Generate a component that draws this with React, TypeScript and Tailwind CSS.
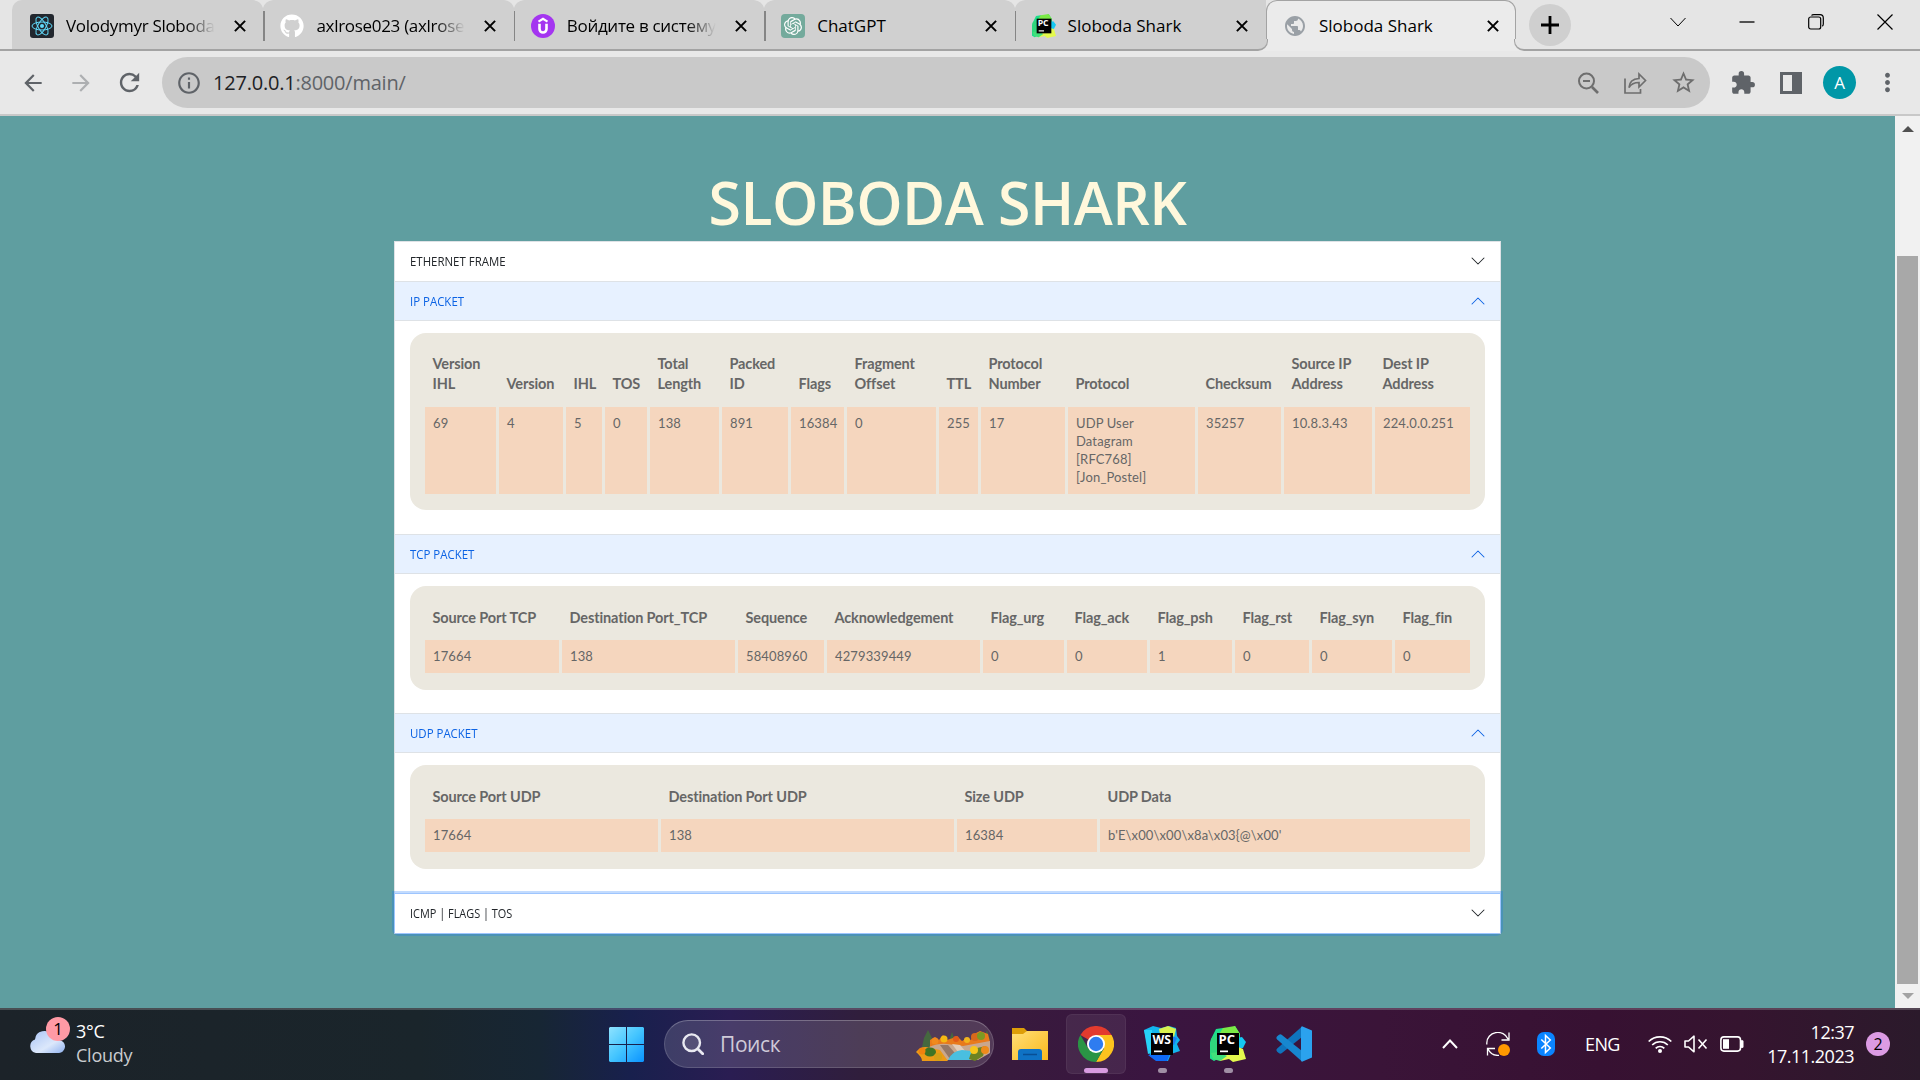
import React from "react";
import { FaGithub } from "react-icons/fa";
import { SiOpenai } from "react-icons/si";
import {
  MdArrowBack,
  MdArrowForward,
  MdRefresh,
  MdInfoOutline,
  MdStarBorder,
  MdExtension,
  MdMoreVert,
  MdPublic,
} from "react-icons/md";

/* ---------- Small logos ---------- */

function ReactLogo() {
  return (
    <svg viewBox="0 0 24 24" className="h-6 w-6">
      <rect width="24" height="24" rx="3" fill="#22272e" />
      <g fill="none" stroke="#61dafb" strokeWidth="1">
        <ellipse cx="12" cy="12" rx="10" ry="4" />
        <ellipse cx="12" cy="12" rx="10" ry="4" transform="rotate(60 12 12)" />
        <ellipse cx="12" cy="12" rx="10" ry="4" transform="rotate(120 12 12)" />
      </g>
      <circle cx="12" cy="12" r="2" fill="#61dafb" />
    </svg>
  );
}

function UdemyLogo() {
  return (
    <svg viewBox="0 0 24 24" className="h-6 w-6">
      <circle cx="12" cy="12" r="12" fill="#a435f0" />
      <path d="M7.500 7.600 12 4.900l4.500 2.700" fill="none" stroke="#fff" strokeWidth="2.200" />
      <path d="M8.500 9.700v5.300a3.500 3.500 0 0 0 7 0V9.700" fill="none" stroke="#fff" strokeWidth="2.600" />
    </svg>
  );
}

function ChatLogo() {
  return (
    <span className="flex h-6 w-6 items-center justify-center rounded-[4px] bg-[#74aa9c] text-white">
      <SiOpenai size={18} />
    </span>
  );
}

function PyCharmLogo({ className }: { className: string }) {
  return (
    <svg viewBox="0 0 36 36" className={className}>
      <path d="M1 13 6 3l7-1 5 2 7-4 5 8 0 5-13 15-13 7-8-5z" fill="#1fdd8b" />
      <path d="M13 2 25 0l5 8-6 4-16-2z" fill="#7bea46" />
      <path d="M1 13 8 8l2 14-5 10-5-4z" fill="#2fd67c" />
      <path d="m27 12 5-1 4 5-3 6-6 1z" fill="#14c8f2" />
      <path d="m8 28 20-7 5 2 3 10-13 3-4-3-9 2z" fill="#e4f94d" />
      <path d="m1 27 8-1 8 4-7 5-7-2z" fill="#41e07a" />
      <rect x="7" y="7" width="22" height="22" fill="#020202" />
      <text x="8.500" y="18" fontSize="12" fontWeight="700" fontFamily="Open Sans" fill="#fff" textLength="16.500" lengthAdjust="spacingAndGlyphs">
        PC
      </text>
      <rect x="10" y="24.500" width="8" height="1.700" fill="#fff" />
    </svg>
  );
}

function WebStormLogo() {
  return (
    <svg viewBox="0 0 36 36" className="h-9 w-9">
      <path d="M0 4 9 0l8 2 8-2 7 2 1 8 3 4-3 4 3 7-9 3-3 7-11 0-7-5z" fill="#12b5ee" />
      <path d="m15 3 9-3 8 3-2 8-13 2z" fill="#d9f24e" />
      <path d="m28 10 5 2-3 7-4-1z" fill="#1e7df0" />
      <path d="m4 29 10-1 12 0-3 7-11 0z" fill="#0f6bf5" />
      <path d="M0 4 8 4l1 22-5 2z" fill="#27d2f7" />
      <rect x="7" y="7" width="22" height="22" fill="#020202" />
      <text x="8.400" y="18" fontSize="12" fontWeight="700" fontFamily="Open Sans" fill="#fff" textLength="18.500" lengthAdjust="spacingAndGlyphs">
        WS
      </text>
      <rect x="10" y="24.500" width="8" height="1.700" fill="#fff" />
    </svg>
  );
}

function CloseX() {
  return (
    <svg viewBox="0 0 12 12" className="h-3 w-3 shrink-0">
      <path d="M.9.9l10.200 10.200M11.100.9.9 11.100" stroke="#000" strokeWidth="2" />
    </svg>
  );
}

/* ---------- Browser chrome ---------- */

type Tab = { title: string; icon: React.ReactNode; fade?: boolean };

const TABS: Tab[] = [
  { title: "Volodymyr Sloboda", icon: <ReactLogo />, fade: true },
  { title: "axlrose023 (axlrose", icon: <FaGithub size={24} color="#fff" />, fade: true },
  { title: "Войдите в систему", icon: <UdemyLogo />, fade: true },
  { title: "ChatGPT", icon: <ChatLogo /> },
  { title: "Sloboda Shark", icon: <PyCharmLogo className="h-6 w-6" /> },
];

function TabLabel({ title, fade }: { title: string; fade?: boolean }) {
  return (
    <span
      className={
        "ml-3 w-[149px] whitespace-nowrap text-[17px] leading-6 " +
        (fade
          ? "bg-[linear-gradient(to_right,#000_80%,#d0d0d0)] bg-clip-text tracking-[-0.3px] text-transparent"
          : "text-black")
      }
    >
      {title}
    </span>
  );
}

function TabStrip() {
  return (
    <div className="flex h-[51px] border-b-2 border-[#a3a3a3] bg-[#e5e5e5]">
      <div className="h-[49px] w-3 rounded-br-[10px] bg-[#e5e5e5]" />
      <div className="flex h-[49px] w-[1254px] rounded-tl-[10px] bg-[#d0d0d0]">
        {TABS.map((t, i) => (
          <div key={i} className="relative flex h-[49px] w-[250.400px] items-center pl-[18px] pt-[2px]">
            {i > 0 && <span className="absolute left-[1px] top-[11px] h-[30px] w-[1.500px] bg-[#858585]" />}
            {i > 0 && (
              <svg viewBox="0 0 20 8" className="absolute -left-[9px] top-0 h-2 w-5">
                <path d="M0 0h20q-8 1-10 8Q8 1 0 0z" fill="#e5e5e5" />
              </svg>
            )}
            <span className="h-6 w-6 shrink-0">{t.icon}</span>
            <TabLabel title={t.title} fade={t.fade} />
            <span className="ml-[19px]">
              <CloseX />
            </span>
          </div>
        ))}
      </div>
      <div className="relative h-[51px] w-[250px] shrink-0 rounded-t-[11px] border-x-[1.500px] border-t-[1.500px] border-[#a3a3a3] bg-[#ebebeb]">
        <div className="absolute -left-[10px] bottom-0 h-3 w-[11px] bg-[#ebebeb]">
          <div className="h-3 w-[11px] rounded-br-[10px] border-b-2 border-r border-[#a3a3a3] bg-[#d0d0d0]" />
        </div>
        <div className="absolute -right-[10px] bottom-0 h-3 w-[11px] bg-[#ebebeb]">
          <div className="h-3 w-[11px] rounded-bl-[10px] border-b-2 border-l border-[#a3a3a3] bg-[#e5e5e5]" />
        </div>
        <div className="flex h-[49px] items-center pl-[16px]">
          <MdPublic size={24} color="#9aa0a6" className="shrink-0" />
          <TabLabel title="Sloboda Shark" />
          <span className="ml-[19px]">
            <CloseX />
          </span>
        </div>
      </div>
      <div className="ml-[13px] mt-[4px] flex h-[42px] w-[42px] items-center justify-center rounded-full bg-[#cfcfcf]">
        <svg viewBox="0 0 18 18" className="h-[18px] w-[18px]">
          <path d="M9 0v18M0 9h18" stroke="#000" strokeWidth="2.800" />
        </svg>
      </div>
      <div className="ml-auto flex h-[43px] items-center gap-[53px] pr-[27px] text-black">
        <svg viewBox="0 0 16 16" className="h-4 w-4" fill="none" stroke="currentColor" strokeWidth="1">
          <path d="m.5 4 7.500 8 7.500-8" />
        </svg>
        <svg viewBox="0 0 16 16" className="h-4 w-4" stroke="currentColor" strokeWidth="1.300">
          <path d="M.5 8h15" />
        </svg>
        <svg viewBox="0 0 16 16" className="h-4 w-4" fill="none" stroke="currentColor" strokeWidth="1.200">
          <rect x=".7" y="3" width="12" height="12" rx="2" />
          <path d="M3.500 1.500Q4 .7 6 .7h6q3.300 0 3.300 3.300v6q0 1.500-1 2.300" />
        </svg>
        <svg viewBox="0 0 16 16" className="h-4 w-4" stroke="currentColor" strokeWidth="1.200">
          <path d="m.5.5 15 15M15.500.5l-15 15" />
        </svg>
      </div>
    </div>
  );
}

function Toolbar() {
  return (
    <div className="flex h-[65px] items-center border-b-2 border-[#c8c8c8] bg-[#e8e8e8] pl-5 text-[#5f6368]">
      <MdArrowBack size={26} />
      <MdArrowForward size={26} className="ml-[22px] text-[#adafb1]" />
      <MdRefresh size={29} className="ml-[21px]" />
      <div className="ml-[18px] flex h-[51px] w-[1548px] items-center rounded-full bg-[#c9c9c9] pl-[14px] pr-[13.5px]">
        <MdInfoOutline size={26} />
        <span className="ml-[11px] text-[20px] tracking-[-0.22px] text-[#5f6368]">
          <span className="text-[#202124]">127.0.0.1</span>:8000/main/
        </span>
        <span className="ml-auto flex items-center gap-[23px] text-[#6e6e6e]">
          <svg viewBox="0 0 24 24" className="h-6 w-6" fill="none" stroke="currentColor" strokeWidth="2">
            <circle cx="10.500" cy="10" r="7.500" />
            <path d="M7 10h7" />
            <path d="m16 16 6 6" strokeWidth="2.600" />
          </svg>
          <svg viewBox="0 0 24 24" className="h-6 w-6" fill="none" stroke="currentColor" strokeWidth="1.700">
            <path d="M2 7.500V22h15.500v-4" />
            <path d="M6 16.500q.5-8.500 10-9V3l6.500 6.500-6.500 6.500v-4.500q-7 0-10 5z" />
          </svg>
          <MdStarBorder size={27} />
        </span>
      </div>
      <MdExtension size={26} className="ml-[20px]" />
      <svg viewBox="0 0 22 22" className="ml-[24px] h-[22px] w-[22px]">
        <path fill="currentColor" fillRule="evenodd" d="M0 0h22v22H0zM3 3v16h9V3z" />
      </svg>
      <span className="ml-[21px] flex h-[33px] w-[33px] items-center justify-center rounded-full bg-[#0097a7] text-[17px] text-white">
        A
      </span>
      <MdMoreVert size={29} className="ml-[17px]" />
    </div>
  );
}

/* ---------- Page content ---------- */

type TableData = { cols: string; headers: string[]; cells: string[]; tall?: boolean };

const IP: TableData = {
  tall: true,
  cols: "grid-cols-[71px_64px_36px_42px_69px_66px_53px_89px_39px_84px_127px_83px_88px_95px]",
  headers: ["Version IHL", "Version", "IHL", "TOS", "Total Length", "Packed ID", "Flags", "Fragment Offset", "TTL", "Protocol Number", "Protocol", "Checksum", "Source IP Address", "Dest IP Address"],
  cells: ["69", "4", "5", "0", "138", "891", "16384", "0", "255", "17", "UDP User Datagram [RFC768] [Jon_Postel]", "35257", "10.8.3.43", "224.0.0.251"],
};

const TCP: TableData = {
  cols: "grid-cols-[134px_173px_86px_153px_81px_80px_82px_74px_80px_75px]",
  headers: ["Source Port TCP", "Destination Port_TCP", "Sequence", "Acknowledgement", "Flag_urg", "Flag_ack", "Flag_psh", "Flag_rst", "Flag_syn", "Flag_fin"],
  cells: ["17664", "138", "58408960", "4279339449", "0", "0", "1", "0", "0", "0"],
};

const UDP: TableData = {
  cols: "grid-cols-[233px_293px_140px_370px]",
  headers: ["Source Port UDP", "Destination Port UDP", "Size UDP", "UDP Data"],
  cells: ["17664", "138", "16384", "b'E\\x00\\x00\\x8a\\x03{@\\x00'"],
};

function Chevron({ open }: { open?: boolean }) {
  return (
    <svg
      viewBox="0 0 16 16"
      className={"h-4 w-4 " + (open ? "rotate-180 text-[#0c63e4]" : "text-[#212529]")}
      fill="none"
      stroke="currentColor"
      strokeWidth="1.050"
      strokeLinecap="round"
      strokeLinejoin="round"
    >
      <path d="m2 5 6 6 6-6" />
    </svg>
  );
}

function SectionHeader({ title, open }: { title: string; open?: boolean }) {
  return (
    <div
      className={
        "flex items-center justify-between pl-[15px] pr-[14.5px] text-[13px] " +
        (open ? "h-[38px] bg-[#e7f1ff] text-[#0c63e4]" : "h-[39px] bg-white pb-px text-[#212529]")
      }
    >
      <span
        className={
          "origin-left leading-5 " + (title.startsWith("ICMP") ? "scale-x-[.84]" : "scale-x-[.88]")
        }
      >
        {title}
      </span>
      <Chevron open={open} />
    </div>
  );
}

function DataPanel({ data }: { data: TableData }) {
  return (
    <div
      className={
        "rounded-[16px] bg-[#ebe8df] px-[15px] font-['Lato',sans-serif] text-[#666] [font-variant-ligatures:none] " +
        (data.tall ? "h-[177px] pt-[21px]" : "h-[104px] pt-[22px]")
      }
    >
      <div
        className={
          "grid items-end gap-[3px] text-[14.5px] font-bold leading-5 tracking-[-0.13px] " +
          data.cols +
          (data.tall ? " h-[53px] pb-[13px]" : " h-[32px] pb-[12px]")
        }
      >
        {data.headers.map((h) => (
          <div key={h} className="pl-[7.5px]">
            {h}
          </div>
        ))}
      </div>
      <div className={"grid gap-[3px] text-[13px] leading-[18px] tracking-[0.13px] " + data.cols + (data.tall ? " h-[87px]" : " h-[33px]")}>
        {data.cells.map((c, i) => (
          <div key={i} className={"bg-[#f5d6be] pl-2 pt-[7px] " + (c.startsWith("UDP User") ? "pr-[45px]" : "")}>
            {c}
          </div>
        ))}
      </div>
    </div>
  );
}

function OpenSection({ title, data, height }: { title: string; data: TableData; height: string }) {
  return (
    <div className={"border-t border-[#dee2e6] " + height}>
      <SectionHeader title={title} open />
      <div className="border-t border-[#dee2e6] px-[15px] pt-3">
        <DataPanel data={data} />
      </div>
    </div>
  );
}

function ScrollBar() {
  return (
    <div className="flex w-[25px] flex-col items-center bg-[#f1f1f1]">
      <div className="flex h-[140px] w-full justify-center pt-[10px]">
        <svg viewBox="0 0 12 6" className="h-[6px] w-3">
          <path d="m0 6 6-6 6 6z" fill="#505050" />
        </svg>
      </div>
      <div className="h-[728px] w-[21px] bg-[#a8a8a8]" />
      <svg viewBox="0 0 12 6" className="mt-[9px] h-[6px] w-3">
        <path d="m0 0 6 6 6-6z" fill="#a3a3a3" />
      </svg>
    </div>
  );
}

function Page() {
  return (
    <div className="flex h-[892px] bg-[#5f9ea0]">
      <div className="flex flex-1 flex-col items-center">
        <h1 className="mt-[47px] h-[78px] whitespace-nowrap text-[59px] font-semibold leading-[78px] tracking-[-0.55px] text-[#fff8dc]">
          SLOBODA SHARK
        </h1>
        <div className="w-[1107px] border border-[#dee2e6] bg-white">
          <SectionHeader title="ETHERNET FRAME" />
          <OpenSection title="IP PACKET" data={IP} height="h-[253px]" />
          <OpenSection title="TCP PACKET" data={TCP} height="h-[179px]" />
          <OpenSection title="UDP PACKET" data={UDP} height="h-[180px]" />
          <div className="relative z-10 mt-px rounded-b-[4px] shadow-[0_0_0_1px_#9ec5fe,0_0_0_3px_rgba(13,110,253,0.25)]">
            <SectionHeader title="ICMP | FLAGS | TOS" />
          </div>
        </div>
      </div>
      <ScrollBar />
    </div>
  );
}

/* ---------- Taskbar ---------- */

function Landscape() {
  return (
    <svg viewBox="0 0 74 31" className="h-[31px] w-[74px]">
      <path d="m12 0 4 8 2 9H6l2-9zM36 2l3 9h-6zM71 0l3 10h-7z" fill="#45683f" />
      <path d="M14 18V10l5-3 4 3 4-5 4 5 6-2 4-2 5 5 5-3 4 2 3-6 6-3 8 3 2 8v8z" fill="#e87a1c" />
      <circle cx="28" cy="9" r="3.500" fill="#f5b913" />
      <circle cx="19" cy="11" r="3.500" fill="#f08a1d" />
      <circle cx="40" cy="9" r="3" fill="#e25b19" />
      <circle cx="51" cy="10" r="3" fill="#f2b41e" />
      <circle cx="59" cy="7" r="4" fill="#d9691b" />
      <circle cx="65" cy="6" r="4" fill="#7c9a22" />
      <path d="M13 17q10-4 18-3l16 2 27-5v12l-12 7H26z" fill="#c9a78e" />
      <path d="m24 15 10 14h10L32 15z" fill="#947767" />
      <path d="m36 14 6 8 8 0-6-7z" fill="#e3ccb8" />
      <path d="M32 30q4-9 14-10l10 1-2 9z" fill="#49bfe0" />
      <path d="M0 22q6-7 14-4l10 2 8 11H6q0-4-6-9z" fill="#ec9b16" />
      <ellipse cx="14" cy="22" rx="6" ry="4.500" fill="#3f7424" />
      <circle cx="6" cy="21" r="3.500" fill="#f0820e" />
      <circle cx="22" cy="27" r="4" fill="#d6a017" />
      <path d="M53 29q2-9 8-11l9-2-3 10-8 5z" fill="#6c8323" />
      <circle cx="58" cy="20" r="4" fill="#f7c61c" />
      <circle cx="69" cy="20" r="4" fill="#ee8b1b" />
    </svg>
  );
}

function ChromeLogo() {
  return (
    <svg viewBox="0 0 36 36" className="h-9 w-9">
      <path d="M18 18 2.400 9A18 18 0 0 1 33.600 9z" fill="#e33b2e" />
      <path d="M18 9h15.600A18 18 0 0 1 18 36l7.800-13.500z" fill="#fcc31e" />
      <path d="M2.400 9A18 18 0 0 0 18 36l7.800-13.500L10.200 22.500z" fill="#2a9445" />
      <circle cx="18" cy="18" r="9" fill="#fff" />
      <circle cx="18" cy="18" r="7.200" fill="#2e7cf0" />
    </svg>
  );
}

function VsCodeLogo() {
  return (
    <svg viewBox="0 0 36 36" className="h-9 w-9">
      <path d="M1.200 22.500q-1.600 1.600 0 3.200l1.800 1.600q1.300.9 2.600 0L26 11V.6z" fill="#0f74bd" />
      <path d="M1.200 13.500q-1.600-1.600 0-3.200L3 8.700q1.300-.9 2.600 0L26 25v10.400z" fill="#1787cf" />
      <path d="M26 .3 36 4.500v27L26 35.700q-1-.5-1-1.700V2q0-1.200 1-1.700z" fill="#2ba2ee" />
    </svg>
  );
}

function FolderLogo() {
  return (
    <svg viewBox="0 0 36 34" className="h-[34px] w-9">
      <defs>
        <linearGradient id="folder" x2="1" y2="1">
          <stop stopColor="#ffdf78" />
          <stop offset="1" stopColor="#fbb91b" />
        </linearGradient>
      </defs>
      <path d="M0 1h12l4 4v8H0z" fill="#dd9e08" />
      <path d="M0 7h11l4-3h21v29H0z" fill="url(#folder)" />
      <path d="M6 33v-8q0-3 3-3h18q3 0 3 3v8z" fill="#0f72c4" />
      <path d="M11 27.500h14" stroke="#084f94" strokeWidth="1.500" />
    </svg>
  );
}

function AppSlot({ children, active, dot }: { children: React.ReactNode; active?: boolean; dot?: boolean }) {
  return (
    <div
      className={
        "relative flex h-[60px] w-[60px] items-center justify-center " +
        (active ? "rounded-[6px] border border-white/5 bg-white/[0.07]" : "")
      }
    >
      {children}
      {active && <span className="absolute bottom-0 h-[5px] w-6 rounded-full bg-[#d89be0]" />}
      {dot && <span className="absolute bottom-[1px] h-[5px] w-[9px] rounded-full bg-[#a08fa5]" />}
    </div>
  );
}

function Tray() {
  return (
    <div className="flex h-[68px] items-center text-white">
      <svg viewBox="0 0 16 10" className="h-[10px] w-4" fill="none" stroke="currentColor" strokeWidth="2">
        <path d="m1 9 7-7.500L15 9" />
      </svg>
      <svg viewBox="0 0 24 24" className="ml-7 h-6 w-6" fill="none" stroke="currentColor" strokeWidth="1.300">
        <path d="M.8 12.500V11A11 10.500 0 0 1 22 7M23 .5V8h-7.500" />
        <path d="M1.500 23.500V16.500H9M2 17a11 11 0 0 0 11 6.300" />
        <circle cx="18" cy="18" r="6" fill="#ff9800" stroke="none" />
      </svg>
      <svg viewBox="0 0 18 24" className="ml-[27px] h-6 w-[18px]">
        <rect width="18" height="24" rx="7" fill="#0a84ff" />
        <path d="m4.300 7.500 9 8.500-4.800 4.500v-17l4.800 4.500-9 8.500" fill="none" stroke="#fff" strokeWidth="1.500" />
      </svg>
      <span className="ml-[30px] w-[36px] text-[18px] tracking-[-0.6px]">ENG</span>
      <svg viewBox="0 0 24 18" className="ml-[27px] h-[18px] w-6" fill="none" stroke="currentColor" strokeWidth="1.700">
        <path d="M.7 6.500a16 16 0 0 1 22.600 0M4.200 10a11 11 0 0 1 15.600 0M7.700 13.300a6 6 0 0 1 8.600 0" />
        <circle cx="12" cy="16" r="2" fill="currentColor" stroke="none" />
      </svg>
      <svg viewBox="0 0 24 18" className="ml-3 h-[18px] w-6" fill="none" stroke="currentColor" strokeWidth="1.600">
        <path d="M1 6h3.500L10 1.200v15.600L4.500 12H1z" strokeLinejoin="round" />
        <path d="m14.500 4.500 8 9M22.500 4.500l-8 9" />
      </svg>
      <svg viewBox="0 0 24 16" className="ml-3 h-4 w-6" fill="none" stroke="currentColor" strokeWidth="1.600">
        <rect x=".9" y=".9" width="19.600" height="14.200" rx="3" />
        <rect x="3" y="3.200" width="6" height="9.600" fill="currentColor" stroke="none" />
        <path d="M22 5.500v5" strokeWidth="3" strokeLinecap="round" />
      </svg>
      <div className="ml-[19px] w-[91px] text-right text-[18px] leading-6 tracking-[-0.5px]">
        <div>12:37</div>
        <div>17.11.2023</div>
      </div>
      <span className="ml-3 mr-[30px] flex h-6 w-6 items-center justify-center rounded-full bg-[#dc9be3] text-[16px] text-black">2</span>
    </div>
  );
}

function Taskbar() {
  return (
    <div className="flex h-[72px] items-start border-t-2 border-white/20 bg-[linear-gradient(to_right,#1c2329_0,#1a252b_420px,#172634_540px,#18204d_630px,#2a1d52_730px,#301e3c_860px,#381a3d_1010px,#3a1540_1150px,#3a1438_1380px,#371132_1600px,#35142f_1740px,#2b1a2b_1920px)] bg-origin-border text-white">
      <div className="relative flex w-[609px] pl-[29px] pt-[7px]">
        <svg viewBox="0 0 36 24" className="mt-3 h-6 w-9">
          <defs>
            <linearGradient id="cloud" x2="1" y2="1">
              <stop stopColor="#a9c4f5" />
              <stop offset=".6" stopColor="#dce8fb" />
              <stop offset="1" stopColor="#8fb1ef" />
            </linearGradient>
          </defs>
          <path d="M7 24a7 7 0 0 1-1-13.500A9 9 0 0 1 23 7q6-1 7 4a6.500 6.500 0 0 1-1 13z" fill="url(#cloud)" />
        </svg>
        <span className="absolute left-[46px] top-[7px] flex h-6 w-6 items-center justify-center rounded-full bg-[#ff9aa5] text-[17px] text-black">
          1
        </span>
        <div className="ml-[11px] mt-[2px] text-[18px] leading-6 tracking-[-0.25px]">
          <div>3°C</div>
          <div className="text-[#c9cccf]">Cloudy</div>
        </div>
      </div>
      <svg viewBox="0 0 35 35" className="mt-[17px] h-[35px] w-[35px]">
        <defs>
          <linearGradient id="win" x2="1" y2="1">
            <stop stopColor="#8fe3ff" />
            <stop offset=".5" stopColor="#44c5ff" />
            <stop offset="1" stopColor="#0a93ff" />
          </linearGradient>
        </defs>
        <path d="M1 0h16v17H0V1zM18 0h16l1 1v16H18zM0 18h17v17H1l-1-1zM18 18h17v16l-1 1H18z" fill="url(#win)" />
      </svg>
      <div className="ml-5 mt-[10px] flex h-12 w-[330px] items-center rounded-full border border-white/15 border-t-white/25 bg-white/[0.14] pl-[17px]">
        <svg viewBox="0 0 22 22" className="h-[22px] w-[22px]" fill="none" stroke="#e9e9f1" strokeWidth="2.400" strokeLinecap="round">
          <circle cx="9.700" cy="9.700" r="8.300" fill="rgba(255,255,255,.1)" />
          <path d="m15.700 15.700 5 5" strokeWidth="2.800" />
        </svg>
        <span className="ml-[16px] pt-[2px] text-[21px] tracking-[-0.4px] text-[#cfcad8]">Поиск</span>
        <span className="ml-auto mr-[3px] mt-[2px]">
          <Landscape />
        </span>
      </div>
      <div className="ml-[6px] mt-1 flex gap-[6px]">
        <AppSlot>
          <FolderLogo />
        </AppSlot>
        <AppSlot active>
          <ChromeLogo />
        </AppSlot>
        <AppSlot dot>
          <WebStormLogo />
        </AppSlot>
        <AppSlot dot>
          <PyCharmLogo className="h-9 w-9" />
        </AppSlot>
        <AppSlot>
          <VsCodeLogo />
        </AppSlot>
      </div>
      <div className="ml-auto">
        <Tray />
      </div>
    </div>
  );
}

export default function App() {
  return (
    <div className="h-[1080px] w-[1920px] overflow-hidden font-['Open_Sans','Noto_Sans',sans-serif]">
      <TabStrip />
      <Toolbar />
      <Page />
      <Taskbar />
    </div>
  );
}
